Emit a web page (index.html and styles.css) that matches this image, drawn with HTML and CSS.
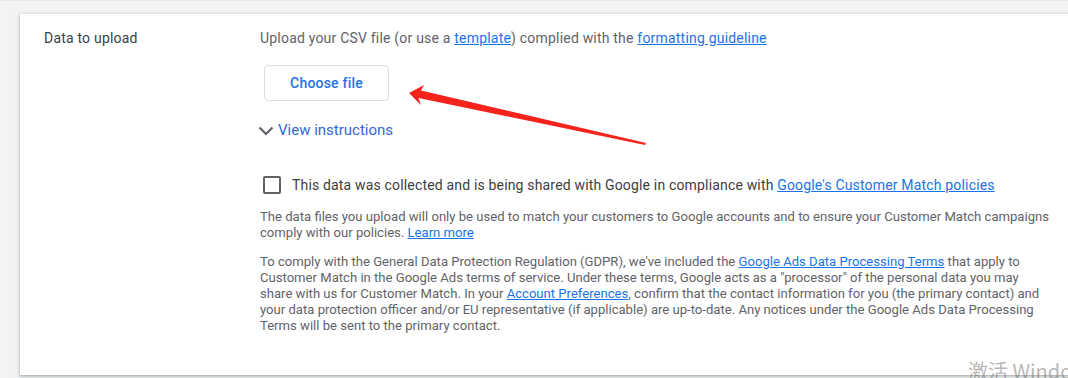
FILE: index.html
```html
<!DOCTYPE html>
<html lang="en">
<head>
<meta charset="utf-8">
<title>Data to upload</title>
<link rel="stylesheet" href="styles.css">
</head>
<body>
<div class="page">
  <div class="card">
    <div class="row">
      <div class="label">Data to upload</div>
      <div class="content">
        <div class="intro">Upload your CSV file (or use a <a href="#">template</a>) complied with the <a href="#">formatting guideline</a></div>
        <button class="file-btn" type="button">Choose file</button>
        <div class="instructions">
          <svg class="chev" width="16" height="10" viewBox="0 0 16 10"><path d="M1.5 1.5 L8 8 L14.5 1.5" fill="none" stroke="#5f6368" stroke-width="2.2"/></svg>
          <span>View instructions</span>
        </div>
        <label class="consent">
          <span class="box"></span>
          <span>This data was collected and is being shared with Google in compliance with <a href="#">Google's Customer Match policies</a></span>
        </label>
        <p class="note note-wide">The data files you upload will only be used to match your customers to Google accounts and to ensure your Customer Match campaigns comply with our policies. <a href="#">Learn more</a></p>
        <p class="note">To comply with the General Data Protection Regulation (GDPR), we've included the <a href="#">Google Ads Data Processing Terms</a> that apply to Customer Match in the Google Ads terms of service. Under these terms, Google acts as a "processor" of the personal data you may share with us for Customer Match. In your <a href="#">Account Preferences</a>, confirm that the contact information for you (the primary contact) and your data protection officer and/or EU representative (if applicable) are up-to-date. Any notices under the Google Ads Data Processing Terms will be sent to the primary contact.</p>
      </div>
    </div>
  </div>
  <svg class="arrow" width="1068" height="378" viewBox="0 0 1068 378">
    <polygon points="409,92 424,84 421,89.5 646,142 645,144 418.5,97 421,104" fill="#f5231b"/>
  </svg>
  <div class="watermark">激活 Windows</div>
</div>
</body>
</html>
```

FILE: styles.css
```css
html, body {
  margin: 0;
  padding: 0;
}
body {
  background: #f1f3f4;
  font-family: Roboto, "Noto Sans", Arial, sans-serif;
  overflow: hidden;
  width: 1068px;
  height: 378px;
}
.page {
  position: relative;
  height: 378px;
  padding: 13px 0 0 20px;
  box-sizing: border-box;
  border-top: 1px solid #e6e8ea;
}
.card {
  background: #fff;
  width: 1080px;
  height: 361px;
  box-sizing: border-box;
  box-shadow: 0 1px 2px rgba(60,64,67,.3), 0 1px 4px 1px rgba(60,64,67,.15);
  padding: 14px 0 0 24px;
}
.row {
  display: flex;
}
.label {
  width: 216px;
  flex: none;
  font-size: 14px;
  line-height: 20px;
  letter-spacing: .2px;
  color: #3c4043;
}
.content {
  width: 804px;
  display: flex;
  flex-direction: column;
  align-items: flex-start;
}
a {
  color: #1a73e8;
  text-decoration: underline;
}
.intro {
  font-size: 14px;
  line-height: 20px;
  letter-spacing: .2px;
  color: #5f6368;
}
.file-btn {
  margin: 17px 0 0 4px;
  width: 125px;
  height: 36px;
  background: #fff;
  border: 1px solid #dadce0;
  border-radius: 4px;
  color: #1a73e8;
  font-family: inherit;
  font-size: 14px;
  font-weight: 500;
  letter-spacing: .2px;
  padding: 0;
}
.instructions {
  margin-top: 19px;
  display: flex;
  align-items: center;
  gap: 4px;
  font-size: 15px;
  line-height: 20px;
  color: #3367d6;
}
.chev {
  margin-left: -2px;
  margin-top: 1px;
}
.consent {
  margin-top: 35px;
  display: flex;
  align-items: center;
  font-size: 14px;
  line-height: 20px;
  letter-spacing: .17px;
  color: #3c4043;
}
.box {
  width: 14px;
  height: 14px;
  border: 2px solid #5f6368;
  border-radius: 2px;
  margin: 0 11px 0 3px;
  flex: none;
}
.note {
  width: 786px;
  margin: 14px 0 0;
  font-size: 13.1px;
  line-height: 16px;
  color: #5f6368;
}
.note-wide {
  width: 802px;
}
.note + .note {
  margin-top: 13px;
}
.arrow {
  position: absolute;
  left: 0;
  top: 0;
  pointer-events: none;
}
.watermark {
  position: absolute;
  left: 968px;
  top: 357px;
  font-family: "Noto Sans CJK SC", "Noto Sans", sans-serif;
  font-size: 20px;
  line-height: 26px;
  color: rgba(120,120,120,.55);
  white-space: nowrap;
}
```
